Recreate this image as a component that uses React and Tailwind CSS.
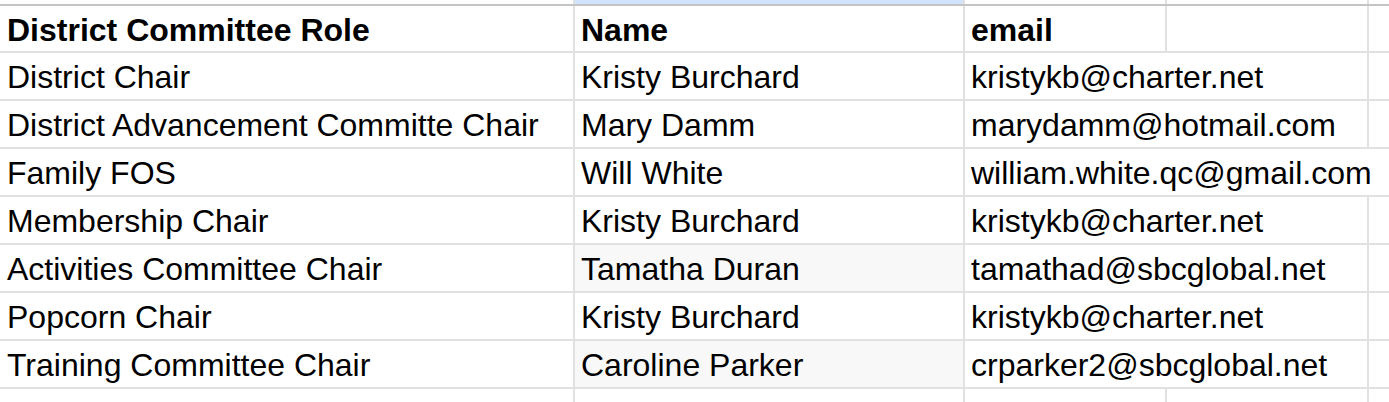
import React from "react";

const rows = [
  { role: "District Chair", name: "Kristy Burchard", email: "kristykb@charter.net" },
  { role: "District Advancement Committe Chair", name: "Mary Damm", email: "marydamm@hotmail.com" },
  { role: "Family FOS", name: "Will White", email: "william.white.qc@gmail.com", wide: true },
  { role: "Membership Chair", name: "Kristy Burchard", email: "kristykb@charter.net" },
  { role: "Activities Committee Chair", name: "Tamatha Duran", email: "tamathad@sbcglobal.net", shaded: true },
  { role: "Popcorn Chair", name: "Kristy Burchard", email: "kristykb@charter.net" },
  { role: "Training Committee Chair", name: "Caroline Parker", email: "crparker2@sbcglobal.net", shaded: true },
];

const gridCols = "grid grid-cols-[575px_390px_202px_202px_20px]";
const line = "border-[#e1e1e1]";

const App = () => {
  return (
    <div className="w-[1389px] h-[402px] overflow-hidden bg-white text-black font-['Liberation_Sans',Arial,sans-serif] text-[32px] leading-[36px]">
      {/* cut-off row above the header */}
      <div className={`${gridCols} h-[6px] border-b-2 border-b-[#c4c4c4]`}>
        <div className={`border-r-2 ${line}`} />
        <div className={`border-r-2 ${line} bg-[#d3e3fd]`} />
        <div className={`border-r-2 ${line}`} />
        <div className={`border-r-2 ${line}`} />
        <div />
      </div>

      {/* header */}
      <div className={`${gridCols} h-[47px] border-b-2 ${line} font-bold`}>
        <div className={`flex items-end pl-[7px] pb-[3px] border-r-2 ${line} whitespace-nowrap`}>
          District Committee Role
        </div>
        <div className={`flex items-end pl-[6px] pb-[3px] border-r-2 ${line}`}>Name</div>
        <div className={`flex items-end pl-[6px] pb-[3px] border-r-2 ${line}`}>email</div>
        <div className={`border-r-2 ${line}`} />
        <div />
      </div>

      {/* data rows */}
      {rows.map((r, i) => (
        <div key={i} className={`${gridCols} h-[48px] border-b-2 ${line}`}>
          <div className={`flex items-end pl-[7px] pb-[4px] border-r-2 ${line} whitespace-nowrap`}>
            {r.role}
          </div>
          <div
            className={`flex items-end pl-[6px] pb-[4px] border-r-2 ${line} whitespace-nowrap ${
              r.shaded ? "bg-[#f8f8f8]" : ""
            }`}
          >
            {r.name}
          </div>
          {r.wide ? (
            <div className="col-span-3 flex items-end pl-[6px] pb-[4px] whitespace-nowrap">{r.email}</div>
          ) : (
            <>
              <div className={`col-span-2 flex items-end pl-[6px] pb-[4px] border-r-2 ${line} whitespace-nowrap`}>
                {r.email}
              </div>
              <div />
            </>
          )}
        </div>
      ))}

      {/* empty row below */}
      <div className={`${gridCols} h-[48px]`}>
        <div className={`border-r-2 ${line}`} />
        <div className={`border-r-2 ${line}`} />
        <div className={`border-r-2 ${line}`} />
        <div className={`border-r-2 ${line}`} />
        <div />
      </div>
    </div>
  );
};

export default App;
